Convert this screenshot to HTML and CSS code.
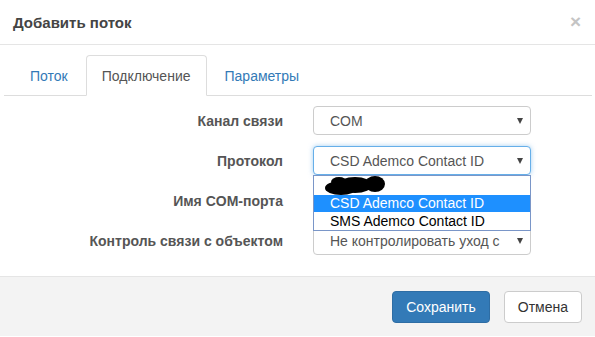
FILE: index.html
```html
<!DOCTYPE html>
<html lang="ru">

<head>
    <meta charset="UTF-8">
    <meta name="viewport" content="width=device-width, initial-scale=1.0">
    <title>Добавить поток</title>
    <link rel="stylesheet" href="styles.css">
</head>

<body>
    <div class="modal">
        <div class="modal-header">
            <h4 class="modal-title">Добавить поток</h4>
            <span class="close">&times;</span>
        </div>
        <div class="modal-body">
            <ul class="tabs">
                <li><a>Поток</a></li>
                <li class="active"><a>Подключение</a></li>
                <li><a>Параметры</a></li>
            </ul>
            <div class="form">
                <div class="row">
                    <label>Канал связи</label>
                    <div class="select"><span class="value">COM</span><span class="caret"></span></div>
                </div>
                <div class="row">
                    <label>Протокол</label>
                    <div class="select focus">
                        <span class="value">CSD Ademco Contact ID</span><span class="caret"></span>
                        <div class="dropdown">
                            <div class="item first"></div>
                            <div class="item selected">CSD Ademco Contact ID</div>
                            <div class="item">SMS Ademco Contact ID</div>
                            <svg class="blob" width="62" height="23" viewBox="0 0 62 23">
                                <ellipse cx="17" cy="14" rx="16" ry="7" fill="#000" />
                                <ellipse cx="31" cy="11" rx="17" ry="8" fill="#000" />
                                <ellipse cx="51" cy="10" rx="10" ry="8" fill="#000" />
                                <ellipse cx="15" cy="8" rx="8" ry="5" fill="#000" />
                            </svg>
                        </div>
                    </div>
                </div>
                <div class="row">
                    <label>Имя COM-порта</label>
                    <div class="select"><span class="value"></span><span class="caret"></span></div>
                </div>
                <div class="row">
                    <label>Контроль связи с объектом</label>
                    <div class="select"><span class="value clip">Не контролировать уход с</span><span class="caret"></span></div>
                </div>
            </div>
        </div>
        <div class="modal-footer">
            <button class="btn primary">Сохранить</button>
            <button class="btn">Отмена</button>
        </div>
    </div>
</body>

</html>
```

FILE: styles.css
```css
body {
    margin: 0;
    font-family: "Liberation Sans", Arial, sans-serif;
    font-size: 14px;
    color: #333;
    background: #fff;
}

.modal {
    width: 595px;
    height: 337px;
    overflow: hidden;
}

.modal-header {
    height: 44px;
    border-bottom: 1px solid #e5e5e5;
    display: flex;
    align-items: center;
    justify-content: space-between;
    padding: 0 14px 0 13px;
}

.modal-title {
    margin: 0;
    font-size: 15px;
    font-weight: bold;
    color: #444;
}

.close {
    font-size: 19px;
    font-weight: bold;
    color: #c4c4c4;
    line-height: 1;
    margin-top: -1px;
}

.modal-body {
    padding: 0 3px 10px 4px;
}

.tabs {
    list-style: none;
    margin: 10px 0 0 0;
    padding: 0 0 0 10px;
    display: flex;
    border-bottom: 1px solid #ddd;
}

.tabs>li {
    margin-right: 2px;
    margin-bottom: -1px;
}

.tabs>li>a {
    display: block;
    padding: 10px 15px 9px;
    line-height: 20px;
    border: 1px solid transparent;
    border-radius: 4px 4px 0 0;
    color: #337ab7;
}

.tabs>li.active>a {
    color: #555;
    border-color: #ddd;
    border-bottom-color: #fff;
    background: #fff;
}

.form {
    margin-top: 10px;
}

.row {
    display: grid;
    grid-template-columns: 279px 218px;
    column-gap: 30px;
    align-items: center;
    height: 29px;
    margin-bottom: 11px;
}

.row label {
    text-align: right;
    font-weight: bold;
    color: #555;
}

.select {
    position: relative;
    box-sizing: border-box;
    height: 29px;
    border: 1px solid #ccc;
    border-radius: 4px;
    display: flex;
    align-items: center;
    padding: 0 7px 0 16px;
    color: #555;
    background: #fff;
}

.select.focus {
    border-color: #66afe9;
    box-shadow: 0 0 5px rgba(102, 175, 233, 0.6);
}

.value {
    flex: 1;
    white-space: nowrap;
    overflow: hidden;
    margin-right: 13px;
}

.caret {
    width: 0;
    height: 0;
    border-left: 3.5px solid transparent;
    border-right: 3.5px solid transparent;
    border-top: 6px solid #444;
    margin-top: 1px;
}

.dropdown {
    position: absolute;
    top: 28px;
    left: -1px;
    right: -1px;
    z-index: 2;
    border: 1px solid #7a96c8;
    background: #fff;
    color: #000;
}

.item {
    height: 18px;
    line-height: 18px;
    padding-left: 16px;
    white-space: nowrap;
}

.item.first {
    height: 19px;
}

.item.selected {
    height: 17px;
    line-height: 17px;
    background: #1e90ff;
    color: #fff;
}

.blob {
    position: absolute;
    left: 10px;
    top: -2px;
}

.modal-footer {
    border-top: 1px solid #e5e5e5;
    background: #f3f3f3;
    height: 60px;
    box-sizing: border-box;
    padding: 14px 13px;
    display: flex;
    justify-content: flex-end;
    gap: 14px;
}

.btn {
    height: 32px;
    padding: 0 13px;
    font-family: "Liberation Sans", Arial, sans-serif;
    font-size: 14px;
    border: 1px solid #ccc;
    border-radius: 4px;
    background: #fff;
    color: #333;
}

.btn.primary {
    background: #337ab7;
    border-color: #2e6da4;
    color: #fff;
}
```
